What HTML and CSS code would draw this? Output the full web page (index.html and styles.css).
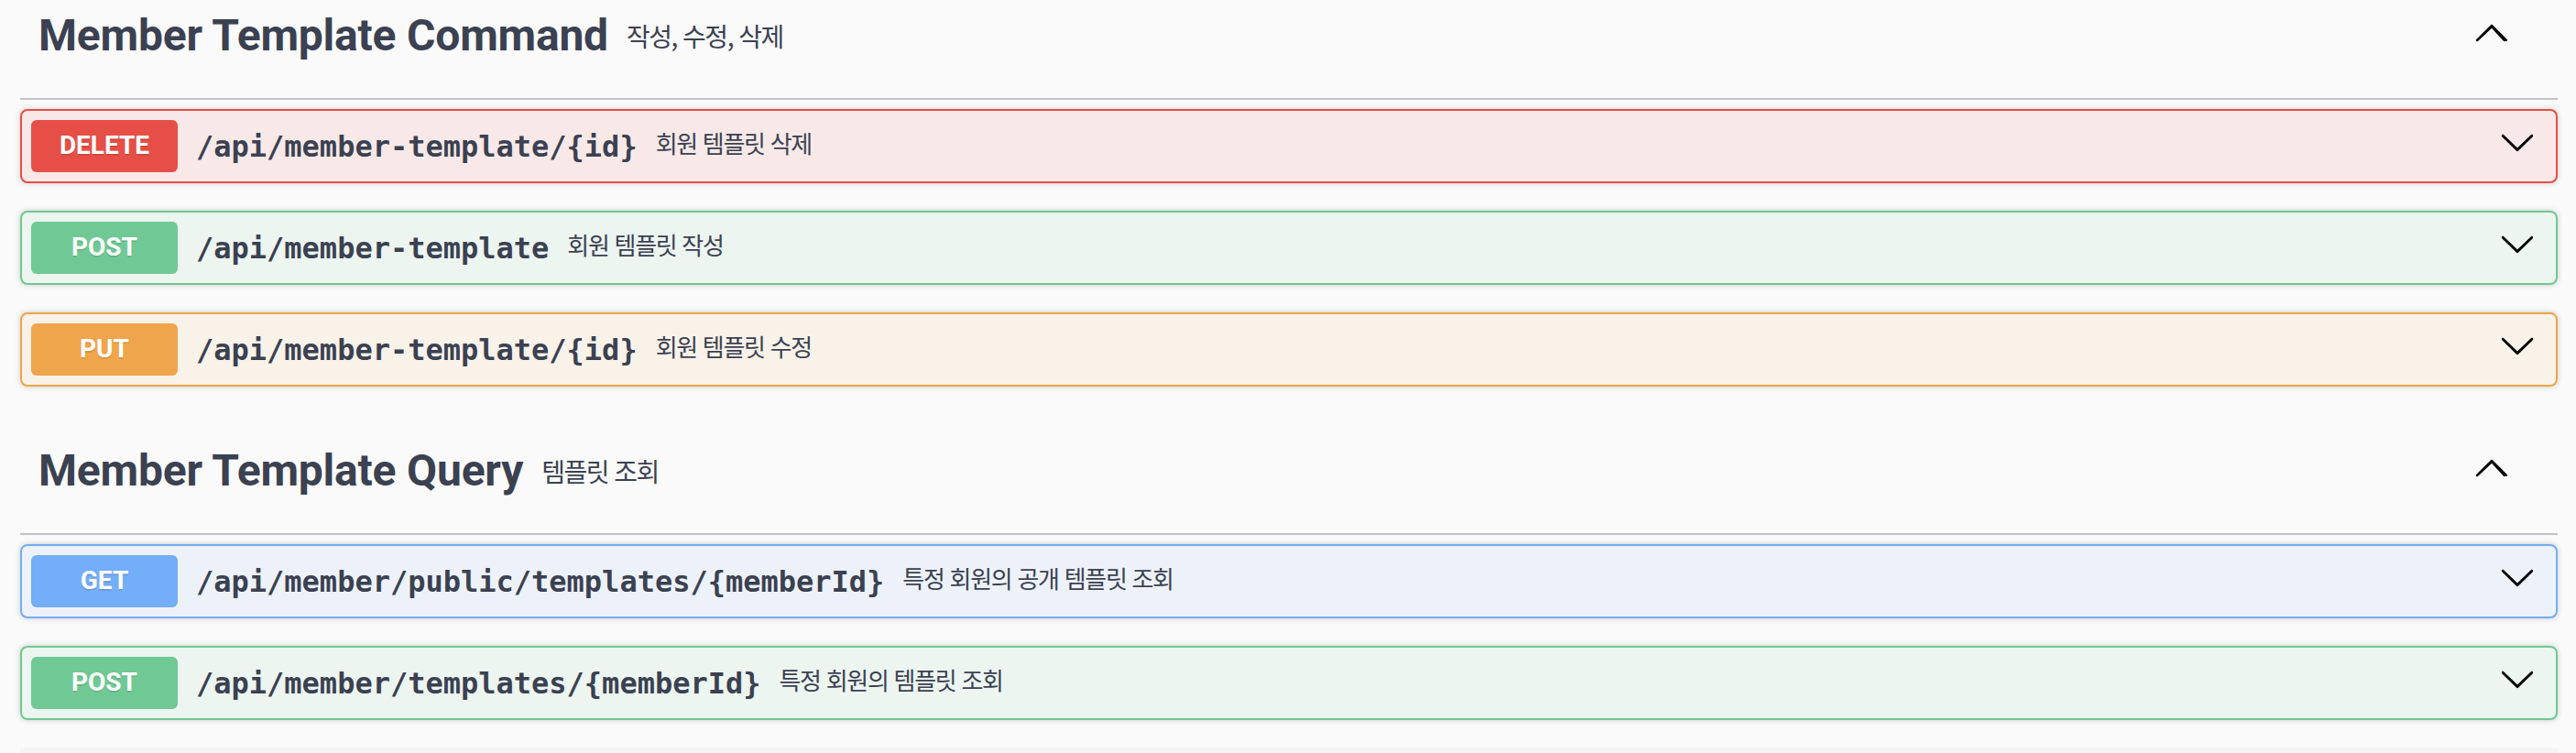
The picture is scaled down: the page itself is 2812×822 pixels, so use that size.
FILE: index.html
```html
<!DOCTYPE html>
<html lang="ko">
<head>
<meta charset="utf-8">
<title>Swagger UI</title>
<link rel="stylesheet" href="styles.css">
</head>
<body>
<div class="page">
  <section class="tag-section">
    <h3 class="tag">
      <span class="tag-name">Member Template Command</span>
      <small class="tag-desc"><p>작성, 수정, 삭제</p></small>
      <button class="expand" aria-label="collapse">
        <svg class="arrow-up" viewBox="0 0 20 20" width="40" height="40"><path d="M17.418 14.908c-.272.268-.709.268-.979 0L10 7.841l-7.439 7.067c-.27.268-.707.268-.979 0-.27-.268-.27-.701 0-.969l7.908-7.83c.27-.268.707-.268.979 0l7.908 7.83c.27.268.27.701 0 .969z"/></svg>
      </button>
    </h3>
    <div class="ops">
      <div class="opblock opblock-delete">
        <div class="summary">
          <span class="method">DELETE</span>
          <span class="path">/api/member-template/{id}</span>
          <span class="desc">회원 템플릿 삭제</span>
          <svg class="arrow" viewBox="0 0 20 20" width="40" height="40"><path d="M17.418 6.109c.272-.268.709-.268.979 0s.271.701 0 .969l-7.908 7.83c-.27.268-.707.268-.979 0l-7.908-7.830c-.27-.268-.27-.701 0-.969.271-.268.709-.268.979 0L10 13.25l7.418-7.141z"/></svg>
        </div>
      </div>
      <div class="opblock opblock-post">
        <div class="summary">
          <span class="method">POST</span>
          <span class="path">/api/member-template</span>
          <span class="desc">회원 템플릿 작성</span>
          <svg class="arrow" viewBox="0 0 20 20" width="40" height="40"><path d="M17.418 6.109c.272-.268.709-.268.979 0s.271.701 0 .969l-7.908 7.83c-.27.268-.707.268-.979 0l-7.908-7.83c-.27-.268-.27-.701 0-.969.271-.268.709-.268.979 0L10 13.25l7.418-7.141z"/></svg>
        </div>
      </div>
      <div class="opblock opblock-put">
        <div class="summary">
          <span class="method">PUT</span>
          <span class="path">/api/member-template/{id}</span>
          <span class="desc">회원 템플릿 수정</span>
          <svg class="arrow" viewBox="0 0 20 20" width="40" height="40"><path d="M17.418 6.109c.272-.268.709-.268.979 0s.271.701 0 .969l-7.908 7.83c-.27.268-.707.268-.979 0l-7.908-7.83c-.27-.268-.27-.701 0-.969.271-.268.709-.268.979 0L10 13.25l7.418-7.141z"/></svg>
        </div>
      </div>
    </div>
  </section>

  <section class="tag-section">
    <h3 class="tag">
      <span class="tag-name">Member Template Query</span>
      <small class="tag-desc"><p>템플릿 조회</p></small>
      <button class="expand" aria-label="collapse">
        <svg class="arrow-up" viewBox="0 0 20 20" width="40" height="40"><path d="M17.418 14.908c-.272.268-.709.268-.979 0L10 7.841l-7.439 7.067c-.27.268-.707.268-.979 0-.27-.268-.27-.701 0-.969l7.908-7.83c.27-.268.707-.268.979 0l7.908 7.83c.27.268.27.701 0 .969z"/></svg>
      </button>
    </h3>
    <div class="ops">
      <div class="opblock opblock-get">
        <div class="summary">
          <span class="method">GET</span>
          <span class="path">/api/member/public/templates/{memberId}</span>
          <span class="desc">특정 회원의 공개 템플릿 조회</span>
          <svg class="arrow" viewBox="0 0 20 20" width="40" height="40"><path d="M17.418 6.109c.272-.268.709-.268.979 0s.271.701 0 .969l-7.908 7.83c-.27.268-.707.268-.979 0l-7.908-7.83c-.27-.268-.27-.701 0-.969.271-.268.709-.268.979 0L10 13.25l7.418-7.141z"/></svg>
        </div>
      </div>
      <div class="opblock opblock-post">
        <div class="summary">
          <span class="method">POST</span>
          <span class="path">/api/member/templates/{memberId}</span>
          <span class="desc">특정 회원의 템플릿 조회</span>
          <svg class="arrow" viewBox="0 0 20 20" width="40" height="40"><path d="M17.418 6.109c.272-.268.709-.268.979 0s.271.701 0 .969l-7.908 7.83c-.27.268-.707.268-.979 0l-7.908-7.83c-.27-.268-.27-.701 0-.969.271-.268.709-.268.979 0L10 13.25l7.418-7.141z"/></svg>
        </div>
      </div>
    </div>
  </section>

  <section class="tag-section">
    <div class="tag tag-next"></div>
  </section>
</div>
</body>
</html>
```

FILE: styles.css
```css
html, body {
  margin: 0;
  padding: 0;
  background: #fafafa;
  overflow: hidden;
}

.page {
  margin-top: -23px;
  padding: 0 20px 0 22px;
  font-family: Roboto, "Noto Sans CJK KR", sans-serif;
  color: #3b4151;
}

.tag-section {
  display: flex;
  flex-direction: column;
}

.tag {
  display: flex;
  align-items: center;
  margin: 0 0 10px;
  padding: 20px 40px 20px 20px;
  border-bottom: 2px solid rgba(59, 65, 81, 0.3);
  font-size: 48px;
  font-weight: 700;
  color: #3b4151;
}

.tag-name {
  line-height: 60px;
  margin-bottom: 7px;
  letter-spacing: -0.2px;
}

.tag-desc {
  flex: 1;
  padding: 0 20px;
  font-family: "Noto Sans CJK KR", sans-serif;
  font-size: 28px;
  font-weight: 400;
  letter-spacing: -1.5px;
  color: #3b4151;
}

.tag-desc p {
  margin: 25px 0 31px;
  line-height: 34px;
}

.expand {
  border: none;
  background: none;
  padding: 0;
  margin: 0 12px 14px 0;
  display: flex;
}

.arrow-up,
.arrow {
  fill: #000;
  flex-shrink: 0;
}

.tag-next {
  height: 8px;
  padding: 0;
  margin: 0;
  border-bottom: none;
  background: #f5f5f5;
}

.ops {
  display: flex;
  flex-direction: column;
}

.opblock {
  margin: 0 0 30px;
  border: 2px solid #000;
  border-radius: 8px;
  box-shadow: 0 0 6px rgba(0, 0, 0, 0.19);
}

.summary {
  display: flex;
  align-items: center;
  padding: 10px;
}

.method {
  min-width: 160px;
  padding: 11px 0 13px;
  border-radius: 6px;
  font-size: 28px;
  line-height: 33px;
  font-weight: 700;
  color: #fff;
  text-align: center;
  text-shadow: 0 2px 0 rgba(0, 0, 0, 0.1);
}

.path {
  padding: 0 20px;
  font-family: "DejaVu Sans Mono", monospace;
  font-size: 32px;
  font-weight: 700;
  color: #3b4151;
}

.desc {
  flex: 1;
  margin-bottom: 8px;
  font-family: "Noto Sans CJK KR", sans-serif;
  font-size: 26px;
  letter-spacing: -1.3px;
  color: #3b4151;
}

.arrow {
  margin: 0 12px 9px 0;
}

.opblock-delete { background: #f8e9e8; border-color: #e64f47; }
.opblock-delete .method { background: #e64f47; }

.opblock-post { background: #ecf5f0; border-color: #70c995; }
.opblock-post .method { background: #70c995; }

.opblock-put { background: #f9f2e9; border-color: #efa54b; }
.opblock-put .method { background: #efa54b; }

.opblock-get { background: #edf2fa; border-color: #74adf8; }
.opblock-get .method { background: #74adf8; }
```
